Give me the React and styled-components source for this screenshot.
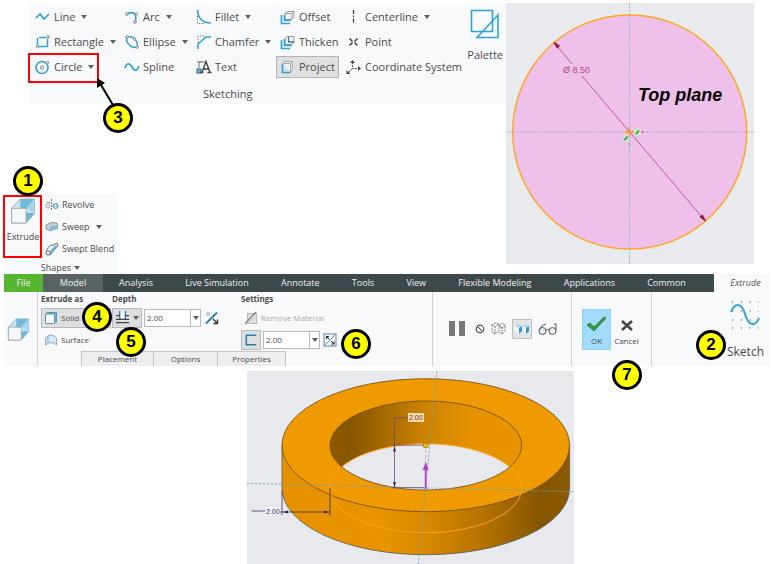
import React from "react";
import styled, { createGlobalStyle } from "styled-components";

const GlobalStyle = createGlobalStyle`
  * {
    box-sizing: border-box;
  }
  body {
    margin: 0;
    background: #fff;
    color: #4b4b4b;
    font-family: "Open Sans", "Noto Sans", sans-serif;
    font-size: 9px;
    line-height: 14px;
  }
  button, input {
    font: inherit;
    color: inherit;
  }
  svg {
    display: block;
    flex: none;
  }
`;

const Page = styled.main`
  padding: 3px 4px 0;
`;

const TopRow = styled.div`
  display: flex;
  align-items: flex-start;
  padding-right: 15px;
`;

const Panels = styled.div`
  flex: 1;
  min-width: 0;
`;

const SketchPanel = styled.section`
  position: relative;
  display: flex;
  justify-content: space-between;
  margin: 2px 0 90px 25px;
  padding: 1px 3px 0 2px;
  background: #f8f9fb;
`;

const SketchTools = styled.div`
  display: grid;
  grid-template-columns: 89px 72px 84px 66px auto;
  gap: 3px 0;
  justify-items: start;
`;

const SketchTitle = styled.h2`
  margin: 0;
  padding: 6px 0 0 172px;
  font-size: 11px;
  font-weight: 400;
  line-height: 20px;
`;

const ShapesTitle = styled.button`
  display: flex;
  align-items: center;
  gap: 3px;
  height: 14px;
  margin: 1px auto 0;
  padding: 2px 0 0;
  border: 0;
  background: transparent;
  font-size: 9px;
`;

const Tool = styled.button`
  display: flex;
  align-items: center;
  gap: 3px;
  height: ${(props) => (props.$small ? 21 : 22)}px;
  padding: 0 ${(props) => (props.$small ? 0 : 3)}px;
  border: 1px solid ${(props) => (props.$active ? "#b3b4b6" : "transparent")};
  background: ${(props) => (props.$active ? "#dfe0e2" : "transparent")};
  font-size: ${(props) => (props.$small ? 9 : 11)}px;
  white-space: nowrap;
  cursor: pointer;
`;

const Caret = styled.span`
  margin-left: ${(props) => props.$space || 0}px;
  border: 3px solid transparent;
  border-top: 4px solid #606060;
  border-bottom: 0;
`;

const BigTool = styled.button`
  display: flex;
  flex-direction: column;
  align-items: center;
  gap: ${(props) => props.$gap}px;
  padding: ${(props) => props.$top || 0}px 0 0;
  border: 0;
  background: transparent;
  font-size: ${(props) => props.$size}px;
  line-height: 14px;
  cursor: pointer;
`;

const ShapesPanel = styled.section`
  position: relative;
  width: 113px;
  background: #f8f9fb;
`;

const ShapesBody = styled.div`
  display: grid;
  grid-template-columns: 38px auto;
  column-gap: 2px;
  align-items: start;
`;

const ShapeList = styled.div`
  display: flex;
  flex-direction: column;
  align-items: flex-start;
  gap: 1px;
`;

const RedFrame = styled.div`
  position: absolute;
  left: ${(props) => props.$x}px;
  top: ${(props) => props.$y}px;
  width: ${(props) => props.$w}px;
  height: ${(props) => props.$h}px;
  border: 2px solid #f00;
  pointer-events: none;
`;

const Pointer = styled.svg`
  position: absolute;
  left: 66px;
  top: 72px;
`;

const Callout = styled.span`
  position: absolute;
  z-index: 2;
  left: ${(props) => props.$x}px;
  top: ${(props) => props.$y}px;
  width: 30px;
  height: 30px;
  border: 3px solid #000;
  border-radius: 50%;
  background: #ff0;
  color: #000;
  font: bold 17px/24px "Liberation Sans", sans-serif;
  text-align: center;
`;

const Ribbon = styled.section`
  position: relative;
  background: #f8f9fb;
`;

const TabBar = styled.nav`
  display: flex;
  height: 18px;
`;

const Tabs = styled.div`
  flex: 1;
  display: flex;
  padding-right: 12px;
  background: #3d484a;
`;

const Tab = styled.button`
  flex: ${(props) => (props.$width ? `0 0 ${props.$width}px` : "1 0 auto")};
  padding: 0;
  border: 0;
  background: ${(props) => props.$bg || "transparent"};
  color: #eef0f0;
  line-height: 18px;
  cursor: pointer;
`;

const ContextTab = styled(Tab)`
  padding-left: 8px;
  color: #555;
  font-style: italic;
`;

const RibbonBody = styled.div`
  display: flex;
  height: 74px;
`;

const Group = styled.div`
  display: flex;
  align-items: center;
  justify-content: ${(props) => props.$justify || "flex-start"};
  width: ${(props) => props.$width};
  gap: ${(props) => props.$gap || 0}px;
  padding: ${(props) => props.$pad || "0"};
  border-right: ${(props) => (props.$last ? "0" : "1px solid #cfd1d4")};
`;

const Options = styled.div`
  display: flex;
  flex-direction: column;
  justify-content: space-between;
  flex: 1;
  padding-left: 3px;
  border-right: 1px solid #cfd1d4;
`;

const Fields = styled.div`
  display: grid;
  grid-template-columns: 71px 129px auto;
`;

const Field = styled.div`
  display: flex;
  flex-direction: column;
  align-items: flex-start;
  gap: 1px;
`;

const Heading = styled.label`
  font-size: 8px;
  font-weight: 700;
  line-height: 14px;
`;

const FieldRow = styled.div`
  display: flex;
  align-items: center;
  gap: 2px;
  height: 21px;
`;

const Choice = styled.button`
  display: flex;
  align-items: center;
  gap: 3px;
  width: ${(props) => props.$width || "auto"};
  height: 20px;
  padding: 0 2px;
  border: 1px solid ${(props) => (props.$active ? "#b7b9bb" : "transparent")};
  background: ${(props) => (props.$active ? "#dcdee0" : "transparent")};
  font-size: 8px;
  white-space: nowrap;
  cursor: pointer;
  &:disabled {
    color: #aaa;
    cursor: default;
  }
`;

const Combo = styled.div`
  display: flex;
  width: 57px;
  height: 18px;
  border: 1px solid #b9babc;
  background: #fff;
`;

const ComboInput = styled.input`
  width: 45px;
  padding: 0 2px;
  border: 0;
  background: transparent;
  font-size: 8px;
  outline: none;
`;

const ComboArrow = styled.button`
  display: flex;
  align-items: center;
  justify-content: center;
  flex: 1;
  padding: 0;
  border: 0;
  border-left: 1px solid #b9babc;
  background: #fff;
`;

const IconButton = styled.button`
  display: flex;
  align-items: center;
  justify-content: center;
  padding: ${(props) => (props.$active ? "2px" : "0")};
  border: ${(props) => (props.$active ? "1px solid #bdbfc1" : "0")};
  background: ${(props) => (props.$active ? "#e2e4e6" : "transparent")};
  cursor: pointer;
`;

const Drawers = styled.div`
  display: flex;
  padding-left: 40px;
`;

const Drawer = styled.button`
  height: 15px;
  min-width: ${(props) => props.$width}px;
  margin-right: -1px;
  padding: 0;
  border: 1px solid #c3c5c8;
  border-bottom: 0;
  background: #eceef0;
  font-size: 8px;
`;

const Confirm = styled.button`
  display: flex;
  flex-direction: column;
  align-items: center;
  justify-content: flex-end;
  gap: 3px;
  width: 29px;
  height: 41px;
  padding: 0 0 2px;
  border: 1px solid ${(props) => (props.$primary ? "#8fd2f5" : "transparent")};
  background: ${(props) => (props.$primary ? "#a3dcfb" : "transparent")};
  font-size: 8px;
  line-height: 12px;
`;

const Model = styled.div`
  display: flex;
  justify-content: center;
  padding: 5px 0 0 48px;
`;

const blue = "#2fa3d6";

const icons = {
  line: <path d="M1 9 5 5l4 5 5-5" fill="none" stroke={blue} strokeWidth="1.6" />,
  rectangle: (
    <>
      <path d="M2.500 4v8.500h10V5M4 3.500h7" fill="none" stroke={blue} strokeWidth="1.500" />
      <circle cx="2.500" cy="12.500" r="1.300" fill="#fff" stroke="#888" />
      <circle cx="13" cy="3" r="1.300" fill="#fff" stroke="#888" />
    </>
  ),
  circle: (
    <>
      <circle cx="7" cy="8.500" r="6" fill="none" stroke={blue} strokeWidth="1.600" />
      <circle cx="7" cy="8.500" r="1.500" fill="#fff" stroke="#777" />
      <circle cx="12.500" cy="3.500" r="1.300" fill="#fff" stroke="#888" />
    </>
  ),
  arc: (
    <>
      <path d="M4 4.500C9 2 13 5 11.500 12" fill="none" stroke={blue} strokeWidth="1.600" />
      <circle cx="3" cy="5" r="1.300" fill="#fff" stroke="#888" />
      <circle cx="12.500" cy="5" r="1.300" fill="#fff" stroke="#888" />
      <circle cx="11" cy="13" r="1.300" fill="#fff" stroke="#888" />
    </>
  ),
  ellipse: (
    <>
      <ellipse cx="8" cy="8" rx="6.500" ry="4" transform="rotate(45 8 8)" fill="none" stroke={blue} strokeWidth="1.500" />
      <circle cx="3" cy="3" r="1.300" fill="#fff" stroke="#888" />
      <circle cx="10.500" cy="5" r="1.300" fill="#fff" stroke="#888" />
      <circle cx="13" cy="13" r="1.300" fill="#fff" stroke="#888" />
    </>
  ),
  spline: <path d="M1 9c2-6 5-5 7-1s5 5 7-1" fill="none" stroke={blue} strokeWidth="1.700" />,
  fillet: (
    <>
      <path d="M1.500 1C2 9 6 14 15 14" fill="none" stroke={blue} strokeWidth="1.600" />
      <path d="M1.500 7v7.500H8" fill="none" stroke="#777" strokeDasharray="1.500 1.500" />
    </>
  ),
  chamfer: (
    <>
      <path d="M2 15V10l8-7h5" fill="none" stroke={blue} strokeWidth="1.500" />
      <path d="M2 9V2h8" fill="none" stroke="#777" strokeDasharray="1.500 1.500" />
    </>
  ),
  text: (
    <>
      <path d="M3 9V3h6M1 3h4" fill="none" stroke="#777" />
      <rect x="1" y="10" width="4" height="4" fill="#6fb9e0" stroke="#20658c" />
      <path d="m6 13.500 4-11 4 11M7.500 10h5M4.500 13.500h3M11.500 13.500h4" fill="none" stroke="#444" strokeWidth="1.400" />
    </>
  ),
  offset: (
    <>
      <path d="M5 4.500 7 2.500h7v6l-2 2H5zM5 4.500h7v6M12 4.500l2-2" fill="#f4f5f6" stroke="#9a9a9a" />
      <path d="M4.500 6v5.500H11M1.500 6v8.500H10" fill="none" stroke={blue} strokeWidth="1.700" />
    </>
  ),
  thicken: (
    <>
      <path d="M5 4.500 7 2.500h7v6l-2 2H5z" fill="#f4f5f6" stroke="#9a9a9a" />
      <path d="M8.500 3v5H14" fill="none" stroke="#417a98" strokeWidth="1.300" />
      <path d="M4.500 5v6.500H12M1.500 6v8.500H10" fill="none" stroke={blue} strokeWidth="1.700" />
    </>
  ),
  project: (
    <>
      <path d="m2.500 4.500 2-2h8v8l-2 3M10.500 4.500l2-2M2.500 4.500h8v9" fill="#eee" stroke="#aaa" />
      <path d="M2.500 5v8.500h8" fill="none" stroke={blue} strokeWidth="1.700" />
    </>
  ),
  centerline: <path d="M7.500 1v14" stroke="#333" strokeWidth="1.200" strokeDasharray="4 1.500 1.500 1.500" />,
  point: <path d="m3.500 4.500 3 3m2 1 3 3m0-7-3 3m-2 1-3 3" stroke="#333" strokeWidth="1.400" />,
  coordinate: (
    <>
      <path d="M6.500 3v6.500H13M6.500 9.500l-4 4" fill="none" stroke="#555" strokeDasharray="2 1" />
      <path d="m4 4 2.500-3L9 4zM12 7l3 2.500-3 2.500zM.500 11v4h4z" fill="#444" />
    </>
  ),
  palette: <path d="M1.500 1.500h21v21h-21zM28 6v22.500H7z" fill="#f8f9fb" stroke={blue} strokeWidth="1.600" />,
  revolve: (
    <>
      <path d="M6.500 1v12" stroke="#777" strokeDasharray="2 1" />
      <circle cx="10.500" cy="8" r="2.500" fill="#b5e0f2" stroke="#4593b8" />
      <circle cx="2.800" cy="8" r="2" fill="none" stroke="#999" />
      <path d="M2 4.500h3" stroke="#999" />
    </>
  ),
  sweep: (
    <>
      <path d="M1 5q5-4 11-2l1 3-7 1v4l-5-2z" fill="#c5ccd0" stroke="#8f999f" />
      <path d="m6 7 7-1v3l-7 2z" fill="#78bfe0" />
    </>
  ),
  blend: (
    <>
      <path d="M1 12q1-9 7-9l4-2 1 3q-5 5-8 9z" fill="#e3edf2" stroke="#777" />
      <path d="m5 9 6-6 1 2-7 7z" fill="#54b2df" />
      <circle cx="3" cy="11" r="2" fill="#fff" stroke="#777" />
    </>
  ),
  box: (
    <>
      <path d="M1 10 9.500 1H23v13.500L15 24H1z" fill="#c6e4f1" stroke="#8aa3b0" strokeWidth=".8" />
      <path d="M9.500 1H23l-8 9H9.500z" fill="#72b9db" />
      <path d="M15 10 23 1v13.500z" fill="#a9d5ea" />
      <path d="M15 14.500h8L15 24z" fill="#6fb6d8" />
      <path d="M1 10h14v14H1z" fill="#f6f7f8" stroke="#9aa3a8" strokeWidth=".8" />
    </>
  ),
  solid: (
    <>
      <path d="M1.500 3 3 1.500h9.500V11L11 12.500" fill="#67b8df" stroke="#5c96b5" />
      <rect x="1.500" y="3" width="9" height="9.500" rx="1" fill="#fff" stroke="#4a8fb3" />
    </>
  ),
  surface: <path d="M1.500 12V5Q7-1 12.500 5v7Q7 7 1.500 12zM4 3v6" fill="#cfeaf5" stroke="#8fa9b6" />,
  depth: (
    <>
      <path d="M5 1v9h6V1" fill="#fff" stroke="#2784b5" strokeWidth="1.500" />
      <path d="M1 6h4M11 6h4M1 10h14M1 13.500h14" stroke="#444" strokeWidth="1.300" />
    </>
  ),
  flip: (
    <>
      <path d="M1 12.500 12 1.500" stroke="#2580ac" strokeWidth="1.800" />
      <path d="m8 8 4 4M12.500 8.500v4h-4" fill="none" stroke="#333" strokeWidth="1.300" />
      <path d="m5 5-3-3M2 5V2h3" fill="none" stroke="#aaa" />
    </>
  ),
  remove: (
    <>
      <rect x="3.500" y="2.500" width="9" height="10" fill="#ddd" stroke="#bbb" />
      <path d="M1 13 12 1" stroke="#888" strokeWidth="1.300" />
    </>
  ),
  thickness: <path d="M13 2.500H2.500v10H13" fill="none" stroke="#2580ac" strokeWidth="1.600" />,
  side: (
    <>
      <rect x="1" y="1" width="12" height="12" fill="#edf5f8" stroke="#61889a" />
      <path d="M1 13 13 1" stroke="#6e99ad" />
      <path d="m3.500 3.500 3 3M3.500 6V3.500H6M8 8l3 3M11 8.500V11H8.500" fill="none" stroke="#222" />
    </>
  ),
  pause: <path d="M0 0h6v15H0zM10 0h6v15h-6z" fill="#777" />,
  none: (
    <>
      <circle cx="5" cy="5" r="3.800" fill="none" stroke="#555" strokeWidth="1.200" />
      <path d="m2.300 2.300 5.400 5.400" stroke="#555" strokeWidth="1.200" />
    </>
  ),
  wire: (
    <path d="m1 3 3 2v7L1 10zM4 5l4-3v7l-4 3M1 3l3-2 4 1M8 4l3 2v6l-3-2M11 6l3-3v6l-3 3M11 6 8 4l3-3 3 2" fill="none" stroke="#777" strokeWidth=".9" strokeDasharray="2 .7" />
  ),
  preview: (
    <>
      <path d="m0 4 4 2v6l-4-3zM8 4l3 2v6l-3-3z" fill="#fff" />
      <path d="m4 6 3-2v5l-3 3zM11 6l3-2v5l-3 3z" fill="#249bd6" />
      <path d="m0 4 3-2 4 2-3 2zM8 4l3-2 3 2-3 2z" fill="#a9dbf2" />
    </>
  ),
  glasses: (
    <>
      <circle cx="4.500" cy="8" r="3.500" fill="#e3eff4" stroke="#555" />
      <circle cx="14.500" cy="8" r="3.500" fill="#e3eff4" stroke="#555" />
      <path d="M8 7q1.500-1.500 3 0M1 7q3-6 7-6M18 7V1h-2" fill="none" stroke="#555" />
    </>
  ),
  check: <path d="m1 9 3-2 4 4L18 1l2 1L8 15z" fill="#2fa344" stroke="#267536" strokeWidth=".8" />,
  cross: <path d="m2 2 10 9M12 2 2 11" stroke="#444" strokeWidth="2.600" />,
};

function Icon({ name, width = 16, height = 16, box }) {
  return (
    <svg width={width} height={height} viewBox={box || `0 0 ${width} ${height}`} aria-hidden="true">
      {icons[name]}
    </svg>
  );
}

const sketchTools = [
  { icon: "line", name: "Line", menu: true },
  { icon: "arc", name: "Arc", menu: true },
  { icon: "fillet", name: "Fillet", menu: true },
  { icon: "offset", name: "Offset" },
  { icon: "centerline", name: "Centerline", menu: true },
  { icon: "rectangle", name: "Rectangle", menu: true },
  { icon: "ellipse", name: "Ellipse", menu: true },
  { icon: "chamfer", name: "Chamfer", menu: true },
  { icon: "thicken", name: "Thicken" },
  { icon: "point", name: "Point" },
  { icon: "circle", name: "Circle", menu: true },
  { icon: "spline", name: "Spline" },
  { icon: "text", name: "Text" },
  { icon: "project", name: "Project", active: true },
  { icon: "coordinate", name: "Coordinate System" },
];

const tabs = [
  "Analysis",
  "Live Simulation",
  "Annotate",
  "Tools",
  "View",
  "Flexible Modeling",
  "Applications",
  "Common",
];

function Sketching() {
  return (
    <SketchPanel>
      <div>
        <SketchTools>
          {sketchTools.map((t) => (
            <Tool key={t.name} $active={t.active}>
              <Icon name={t.icon} />
              {t.name}
              {t.menu && <Caret $space={3} />}
            </Tool>
          ))}
        </SketchTools>
        <SketchTitle>Sketching</SketchTitle>
      </div>
      <BigTool $size={11} $gap={9} $top={3}>
        <Icon name="palette" width={30} height={30} />
        Palette
      </BigTool>
      <RedFrame $x={-1} $y={48} $w={71} $h={30} />
      <Pointer width="24" height="30">
        <path d="M18 28 6 8" stroke="#000" strokeWidth="2" />
        <path d="M2 1v10l8-5z" fill="#000" />
      </Pointer>
      <Callout $x={74} $y={98}>3</Callout>
    </SketchPanel>
  );
}

function Shapes() {
  return (
    <ShapesPanel>
      <ShapesBody>
        <BigTool $size={9} $gap={6} $top={4}>
          <Icon name="box" width={26} height={26} box="0 0 24 25" />
          Extrude
        </BigTool>
        <ShapeList>
          <Tool $small>
            <Icon name="revolve" width={14} height={14} />
            Revolve
          </Tool>
          <Tool $small>
            <Icon name="sweep" width={14} height={14} />
            Sweep
            <Caret $space={3} />
          </Tool>
          <Tool $small>
            <Icon name="blend" width={14} height={14} />
            Swept Blend
          </Tool>
        </ShapeList>
      </ShapesBody>
      <ShapesTitle>
        Shapes <Caret />
      </ShapesTitle>
      <RedFrame $x={-1} $y={1} $w={39} $h={63} />
      <Callout $x={9} $y={-28}>1</Callout>
    </ShapesPanel>
  );
}

function CirclePlane() {
  return (
    <svg width="248" height="261" viewBox="0 0 248 261" role="img" aria-label="Top plane">
      <rect width="248" height="261" fill="#e8eaee" />
      <circle cx="123.700" cy="129" r="117" fill="#eec1ea" stroke="#ffa51f" strokeWidth="1.400" />
      <path d="M0 129h248M123.500 0v261" stroke="#8fa9bd" strokeWidth=".8" strokeDasharray="2 1.500" />
      <path d="M48.500 40 66 61M76 73l123 144.500" stroke="#bd6090" />
      <path d="m48 39 5.500 4-2.500 2zM199.500 218l-5.500-4 2.500-2z" fill="#a01545" stroke="#a01545" />
      <text x="57" y="70" fontSize="9" fontFamily="Liberation Sans, sans-serif" fill="#b04c82">Ø 8.50</text>
      <path d="M119 129h9M123.500 124v9" stroke="#ff9a10" strokeWidth="1.300" />
      <rect x="128" y="125.500" width="7" height="7" rx="1" fill="#c9e8bd" />
      <rect x="117" y="132" width="6" height="7" rx="1" fill="#c9e8bd" />
      <path d="m130 131 3-3.500M118.500 137l3-3.500" stroke="#3d7853" strokeWidth="1.400" />
      <circle cx="136.500" cy="129" r="1" fill="#e0405a" />
      <circle cx="123.500" cy="141.500" r="1" fill="#36b5ee" />
      <text x="132" y="98" fontSize="18" fontWeight="700" fontStyle="italic" fontFamily="Liberation Sans, sans-serif">
        Top plane
      </text>
    </svg>
  );
}

function Ring() {
  return (
    <svg width="327" height="193" viewBox="0 0 327 193" role="img" aria-label="Extruded ring">
      <defs>
        <linearGradient id="wall">
          <stop offset="0" stopColor="#e69200" />
          <stop offset=".35" stopColor="#e99500" />
          <stop offset=".55" stopColor="#d08400" />
          <stop offset=".75" stopColor="#aa6c00" />
          <stop offset=".9" stopColor="#855500" />
          <stop offset="1" stopColor="#8d5a00" />
        </linearGradient>
        <linearGradient id="bore">
          <stop offset="0" stopColor="#8f5b00" />
          <stop offset=".1" stopColor="#855500" />
          <stop offset=".25" stopColor="#a06600" />
          <stop offset=".5" stopColor="#cd8300" />
          <stop offset=".75" stopColor="#e69200" />
          <stop offset="1" stopColor="#e89500" />
        </linearGradient>
        <clipPath id="hole">
          <ellipse cx="178.800" cy="74.500" rx="95.800" ry="44.500" />
        </clipPath>
      </defs>
      <rect width="327" height="193" fill="#e8e9ed" />
      <path d="M35 74.200v43a143.800 66.500 0 0 0 287.600 0v-43z" fill="url(#wall)" stroke="#555" strokeWidth=".8" />
      <ellipse cx="178.800" cy="74.200" rx="143.800" ry="66.500" fill="#ee9a00" stroke="#6b4b10" strokeWidth=".8" />
      <ellipse cx="178.800" cy="74.500" rx="95.800" ry="44.500" fill="url(#bore)" />
      <ellipse cx="178.800" cy="117.200" rx="95.800" ry="44.500" fill="#e8e9ed" clipPath="url(#hole)" />
      <ellipse cx="178.800" cy="117.200" rx="95.800" ry="44.500" fill="none" stroke="#ffa114" />
      <ellipse cx="178.800" cy="74.500" rx="95.800" ry="44.500" fill="none" stroke="#6b4b10" strokeWidth=".8" />
      <path d="m190 0-18.700 193M0 112.300l327 8.400" stroke="#6ea4ad" strokeWidth=".8" strokeDasharray="2.500 1.500" />
      <path d="M161 46.700h-13.500v70M145 74.200h32M145 116.700h32" fill="none" stroke="#6b4a70" strokeWidth=".8" />
      <path d="M147.500 75.500l-1.500 5h3zM147.500 116l-1.500-5h3z" fill="#352252" />
      <rect x="161" y="42" width="16" height="9" fill="#fbdca8" />
      <text x="162" y="49" fontSize="7" fontFamily="Liberation Sans, sans-serif" fill="#5b2c50">2.00</text>
      <text x="183" y="73" fontSize="7" fontFamily="Liberation Sans, sans-serif" fill="#d89020">Section 1</text>
      <path d="M178.700 78v15" stroke="#bbb" strokeDasharray="4 2" />
      <path d="M178.700 118V98" stroke="#b03fce" strokeWidth="1.800" />
      <path d="m178.700 91-3 8h6z" fill="#b03fce" />
      <circle cx="178.700" cy="74.300" r="2.500" fill="#ffc400" stroke="#8c6a10" strokeWidth=".8" />
      <path d="M4.500 140H18M33 141h50M35 120v24M83 117v28" stroke="#3e3155" strokeWidth=".8" />
      <path d="m36 141 5-1.500v3zM82 141l-5-1.500v3z" fill="#352252" />
      <rect x="18" y="136" width="15" height="8" fill="#f3f3f5" />
      <text x="19" y="143" fontSize="7" fontFamily="Liberation Sans, sans-serif" fill="#403060">2.00</text>
    </svg>
  );
}

function ValueBox({ id, label }) {
  return (
    <Combo>
      <ComboInput id={id} aria-label={label} defaultValue="2.00" />
      <ComboArrow aria-label={`${label} values`}>
        <Caret />
      </ComboArrow>
    </Combo>
  );
}

function ExtrudeRibbon() {
  return (
    <Ribbon>
      <TabBar>
        <Tabs>
          <Tab $bg="#56b531" $width={39}>File</Tab>
          <Tab $bg="#596366" $width={60}>Model</Tab>
          {tabs.map((t) => (
            <Tab key={t}>{t}</Tab>
          ))}
        </Tabs>
        <ContextTab $width={55}>Extrude</ContextTab>
      </TabBar>
      <RibbonBody>
        <Group $width="34px" $pad="0 0 0 3px">
          <Icon name="box" width={23} height={23} box="0 0 24 25" />
        </Group>
        <Options>
          <Fields>
            <Field>
              <Heading as="span">Extrude as</Heading>
              <FieldRow>
                <Choice $active $width="70px">
                  <Icon name="solid" width={14} height={14} />
                  Solid
                </Choice>
              </FieldRow>
              <FieldRow>
                <Choice>
                  <Icon name="surface" width={14} height={14} />
                  Surface
                </Choice>
              </FieldRow>
            </Field>
            <Field>
              <Heading htmlFor="depth">Depth</Heading>
              <FieldRow>
                <Choice $active $width="30px" aria-label="Depth type">
                  <Icon name="depth" width={15} height={15} box="0 0 16 16" />
                  <Caret />
                </Choice>
                <ValueBox id="depth" label="Depth" />
                <IconButton aria-label="Flip depth direction">
                  <Icon name="flip" width={16} height={14} box="-2 0 16 14" />
                </IconButton>
              </FieldRow>
            </Field>
            <Field>
              <Heading as="span">Settings</Heading>
              <FieldRow>
                <Choice disabled>
                  <Icon name="remove" width={14} height={14} />
                  Remove Material
                </Choice>
              </FieldRow>
              <FieldRow>
                <Choice $active $width="20px" aria-label="Thicken sketch">
                  <Icon name="thickness" width={14} height={14} box="0 0 15 15" />
                </Choice>
                <ValueBox id="thickness" label="Thickness" />
                <IconButton aria-label="Flip thickness side">
                  <Icon name="side" width={16} height={14} box="-1 0 16 14" />
                </IconButton>
              </FieldRow>
            </Field>
          </Fields>
          <Drawers>
            <Drawer $width={73}>Placement</Drawer>
            <Drawer $width={65}>Options</Drawer>
            <Drawer $width={69}>Properties</Drawer>
          </Drawers>
        </Options>
        <Group $width="139px" $justify="space-between" $pad="0 14px 0 16px">
          <IconButton aria-label="Pause">
            <Icon name="pause" />
          </IconButton>
          <IconButton aria-label="No preview">
            <Icon name="none" width={14} height={10} box="-4 0 14 10" />
          </IconButton>
          <IconButton aria-label="Unattached preview">
            <Icon name="wire" width={15} height={14} />
          </IconButton>
          <IconButton $active aria-label="Attached preview">
            <Icon name="preview" width={14} height={14} />
          </IconButton>
          <IconButton aria-label="Verify">
            <Icon name="glasses" width={19} height={13} />
          </IconButton>
        </Group>
        <Group $width="80px" $gap={1} $pad="0 0 0 10px">
          <Confirm $primary>
            <Icon name="check" width={21} height={16} />
            OK
          </Confirm>
          <Confirm>
            <Icon name="cross" width={14} height={13} />
            Cancel
          </Confirm>
        </Group>
        <Group $last $width="117px" $justify="flex-end" $pad="0 5px 0 0">
          <BigTool $size={12} $gap={15}>
            <svg width="30" height="30" viewBox="0 0 30 30" aria-hidden="true">
              <path
                d="M2 2h27M2 11h27M2 20h27M2 28h27"
                stroke="#555"
                strokeWidth="1.200"
                strokeDasharray="1.200 7.600"
              />
              <path d="M1 12C5 2 12 3 15 14s10 14 14 4" fill="none" stroke={blue} strokeWidth="2" />
            </svg>
            Sketch
          </BigTool>
        </Group>
      </RibbonBody>
      <Callout $x={78} $y={28}>4</Callout>
      <Callout $x={112} $y={53}>5</Callout>
      <Callout $x={337} $y={55}>6</Callout>
      <Callout $x={608} $y={86}>7</Callout>
      <Callout $x={692} $y={56}>2</Callout>
    </Ribbon>
  );
}

export default function App() {
  return (
    <Page>
      <GlobalStyle />
      <TopRow>
        <Panels>
          <Sketching />
          <Shapes />
        </Panels>
        <CirclePlane />
      </TopRow>
      <ExtrudeRibbon />
      <Model>
        <Ring />
      </Model>
    </Page>
  );
}
